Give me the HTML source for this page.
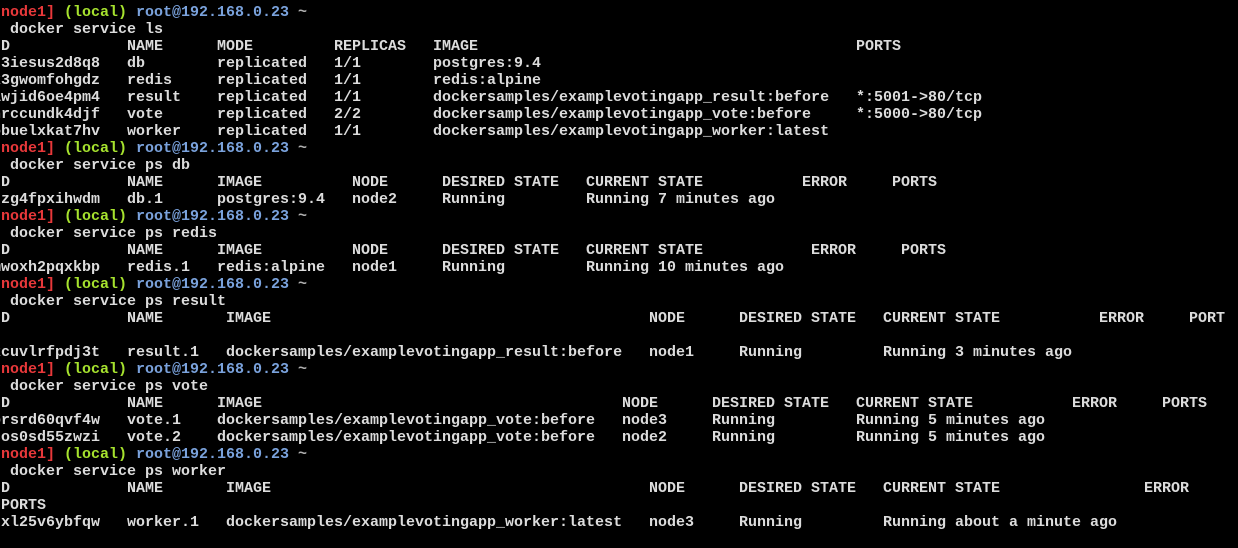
<!DOCTYPE html>
<html><head><meta charset="utf-8"><style>
html,body{margin:0;padding:0;background:#000;width:1238px;height:548px;overflow:hidden}
body{position:relative;font-family:"Liberation Mono","Courier New",monospace;font-size:15px;font-weight:bold;color:#dcdcdc}
#w{position:absolute;left:0;top:1px;width:1238px;height:548px}
.l{position:absolute;left:0;height:17px;line-height:17px;width:1400px}
.l span{position:absolute;white-space:pre;top:0}
.r{color:#e8383a}.g{color:#a6e22e}.b{color:#7aa2dc}.t{color:#b0b0b0}
</style></head><body><div id="w">

<div class="l" style="top:3px"><span class="r" style="left:-8px">[node1]</span><span class="g" style="left:64px">(local)</span><span class="b" style="left:136px">root@192.168.0.23</span><span class="t" style="left:298px">~</span></div>
<div class="l" style="top:20px"><span style="left:1px"> docker service ls</span></div>
<div class="l" style="top:37px"><span style="left:-8px">ID</span><span style="left:127px">NAME</span><span style="left:217px">MODE</span><span style="left:334px">REPLICAS</span><span style="left:433px">IMAGE</span><span style="left:856px">PORTS</span></div>
<div class="l" style="top:54px"><span style="left:-8px">u3iesus2d8q8</span><span style="left:127px">db</span><span style="left:217px">replicated</span><span style="left:334px">1/1</span><span style="left:433px">postgres:9.4</span></div>
<div class="l" style="top:71px"><span style="left:-8px">k3gwomfohgdz</span><span style="left:127px">redis</span><span style="left:217px">replicated</span><span style="left:334px">1/1</span><span style="left:433px">redis:alpine</span></div>
<div class="l" style="top:88px"><span style="left:-8px">awjid6oe4pm4</span><span style="left:127px">result</span><span style="left:217px">replicated</span><span style="left:334px">1/1</span><span style="left:433px">dockersamples/examplevotingapp_result:before</span><span style="left:856px">*:5001-&gt;80/tcp</span></div>
<div class="l" style="top:105px"><span style="left:-8px">nrccundk4djf</span><span style="left:127px">vote</span><span style="left:217px">replicated</span><span style="left:334px">2/2</span><span style="left:433px">dockersamples/examplevotingapp_vote:before</span><span style="left:856px">*:5000-&gt;80/tcp</span></div>
<div class="l" style="top:122px"><span style="left:-8px">obuelxkat7hv</span><span style="left:127px">worker</span><span style="left:217px">replicated</span><span style="left:334px">1/1</span><span style="left:433px">dockersamples/examplevotingapp_worker:latest</span></div>

<div class="l" style="top:139px"><span class="r" style="left:-8px">[node1]</span><span class="g" style="left:64px">(local)</span><span class="b" style="left:136px">root@192.168.0.23</span><span class="t" style="left:298px">~</span></div>
<div class="l" style="top:156px"><span style="left:1px"> docker service ps db</span></div>
<div class="l" style="top:173px"><span style="left:-8px">ID</span><span style="left:127px">NAME</span><span style="left:217px">IMAGE</span><span style="left:352px">NODE</span><span style="left:442px">DESIRED STATE</span><span style="left:586px">CURRENT STATE</span><span style="left:802px">ERROR</span><span style="left:892px">PORTS</span></div>
<div class="l" style="top:190px"><span style="left:-8px">zzg4fpxihwdm</span><span style="left:127px">db.1</span><span style="left:217px">postgres:9.4</span><span style="left:352px">node2</span><span style="left:442px">Running</span><span style="left:586px">Running 7 minutes ago</span></div>

<div class="l" style="top:207px"><span class="r" style="left:-8px">[node1]</span><span class="g" style="left:64px">(local)</span><span class="b" style="left:136px">root@192.168.0.23</span><span class="t" style="left:298px">~</span></div>
<div class="l" style="top:224px"><span style="left:1px"> docker service ps redis</span></div>
<div class="l" style="top:241px"><span style="left:-8px">ID</span><span style="left:127px">NAME</span><span style="left:217px">IMAGE</span><span style="left:352px">NODE</span><span style="left:442px">DESIRED STATE</span><span style="left:586px">CURRENT STATE</span><span style="left:811px">ERROR</span><span style="left:901px">PORTS</span></div>
<div class="l" style="top:258px"><span style="left:-8px">mwoxh2pqxkbp</span><span style="left:127px">redis.1</span><span style="left:217px">redis:alpine</span><span style="left:352px">node1</span><span style="left:442px">Running</span><span style="left:586px">Running 10 minutes ago</span></div>

<div class="l" style="top:275px"><span class="r" style="left:-8px">[node1]</span><span class="g" style="left:64px">(local)</span><span class="b" style="left:136px">root@192.168.0.23</span><span class="t" style="left:298px">~</span></div>
<div class="l" style="top:292px"><span style="left:1px"> docker service ps result</span></div>
<div class="l" style="top:309px"><span style="left:-8px">ID</span><span style="left:127px">NAME</span><span style="left:226px">IMAGE</span><span style="left:649px">NODE</span><span style="left:739px">DESIRED STATE</span><span style="left:883px">CURRENT STATE</span><span style="left:1099px">ERROR</span><span style="left:1189px">PORT</span></div>
<div class="l" style="top:343px"><span style="left:-8px">kcuvlrfpdj3t</span><span style="left:127px">result.1</span><span style="left:226px">dockersamples/examplevotingapp_result:before</span><span style="left:649px">node1</span><span style="left:739px">Running</span><span style="left:883px">Running 3 minutes ago</span></div>

<div class="l" style="top:360px"><span class="r" style="left:-8px">[node1]</span><span class="g" style="left:64px">(local)</span><span class="b" style="left:136px">root@192.168.0.23</span><span class="t" style="left:298px">~</span></div>
<div class="l" style="top:377px"><span style="left:1px"> docker service ps vote</span></div>
<div class="l" style="top:394px"><span style="left:-8px">ID</span><span style="left:127px">NAME</span><span style="left:217px">IMAGE</span><span style="left:622px">NODE</span><span style="left:712px">DESIRED STATE</span><span style="left:856px">CURRENT STATE</span><span style="left:1072px">ERROR</span><span style="left:1162px">PORTS</span></div>
<div class="l" style="top:411px"><span style="left:-8px">prsrd60qvf4w</span><span style="left:127px">vote.1</span><span style="left:217px">dockersamples/examplevotingapp_vote:before</span><span style="left:622px">node3</span><span style="left:712px">Running</span><span style="left:856px">Running 5 minutes ago</span></div>
<div class="l" style="top:428px"><span style="left:-8px">cos0sd55zwzi</span><span style="left:127px">vote.2</span><span style="left:217px">dockersamples/examplevotingapp_vote:before</span><span style="left:622px">node2</span><span style="left:712px">Running</span><span style="left:856px">Running 5 minutes ago</span></div>

<div class="l" style="top:445px"><span class="r" style="left:-8px">[node1]</span><span class="g" style="left:64px">(local)</span><span class="b" style="left:136px">root@192.168.0.23</span><span class="t" style="left:298px">~</span></div>
<div class="l" style="top:462px"><span style="left:1px"> docker service ps worker</span></div>
<div class="l" style="top:479px"><span style="left:-8px">ID</span><span style="left:127px">NAME</span><span style="left:226px">IMAGE</span><span style="left:649px">NODE</span><span style="left:739px">DESIRED STATE</span><span style="left:883px">CURRENT STATE</span><span style="left:1144px">ERROR</span></div>
<div class="l" style="top:496px"><span style="left:1px">PORTS</span></div>
<div class="l" style="top:513px"><span style="left:-8px">qxl25v6ybfqw</span><span style="left:127px">worker.1</span><span style="left:226px">dockersamples/examplevotingapp_worker:latest</span><span style="left:649px">node3</span><span style="left:739px">Running</span><span style="left:883px">Running about a minute ago</span></div>

</div></body></html>
